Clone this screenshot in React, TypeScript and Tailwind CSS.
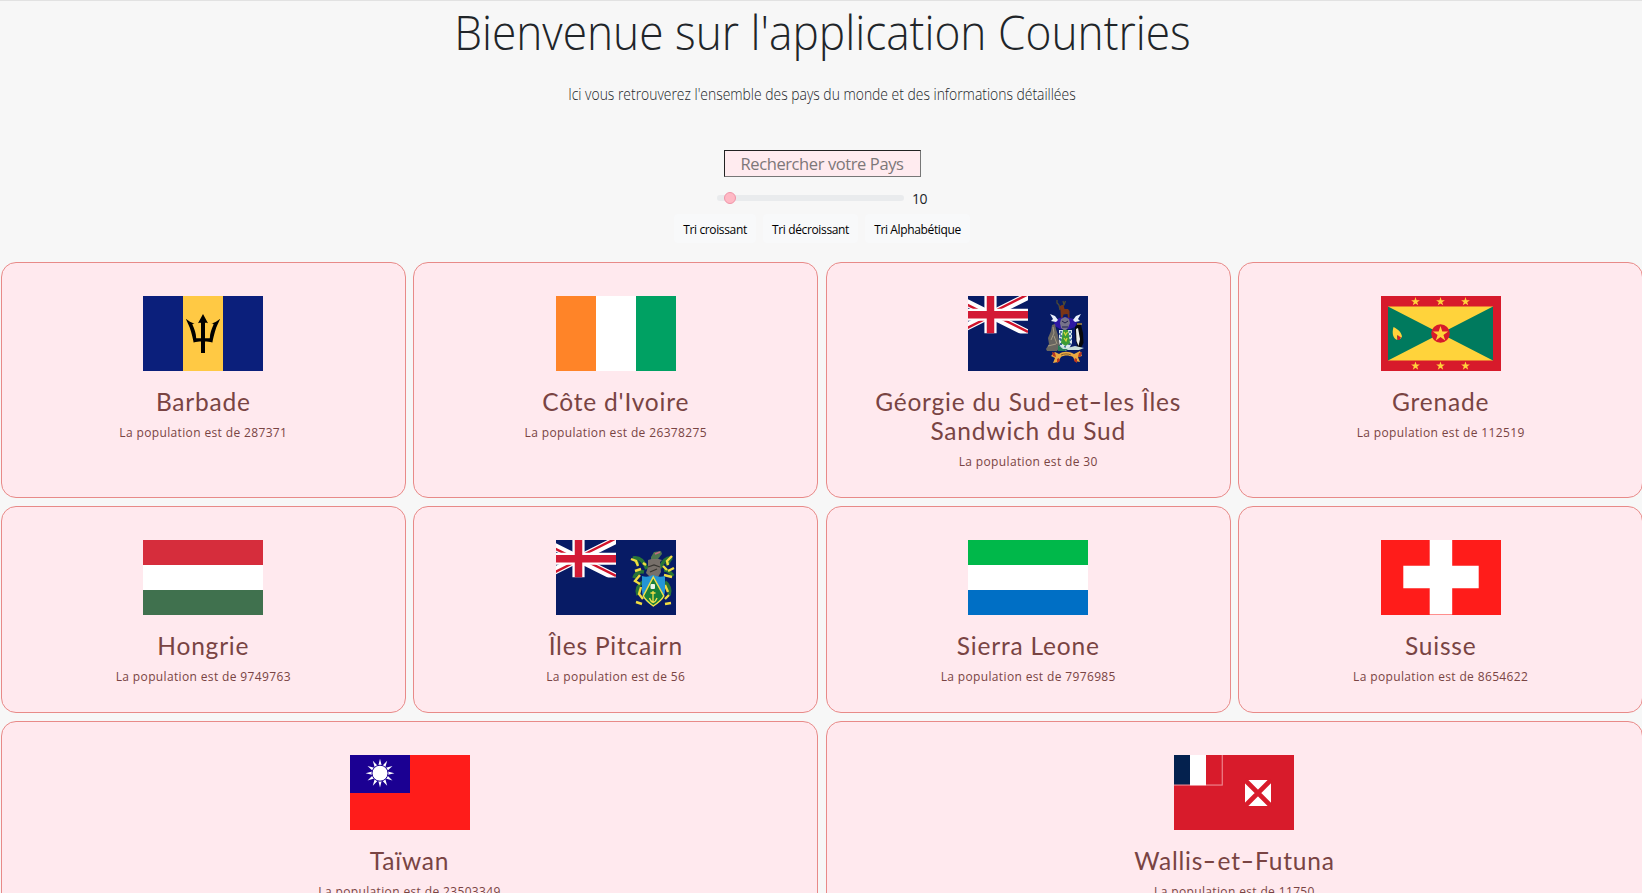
import { Fragment, type ReactNode } from 'react';

function star(cx: number, cy: number, outer: number, inner: number, points = 5): string {
  return Array.from({ length: points * 2 }, (_, i) => {
    const r = i % 2 === 0 ? outer : inner;
    const a = (Math.PI * i) / points - Math.PI / 2;
    return `${(cx + r * Math.cos(a)).toFixed(2)},${(cy + r * Math.sin(a)).toFixed(2)}`;
  }).join(' ');
}

function Flag({ children }: { children: ReactNode }) {
  return (
    <svg viewBox="0 0 120 75" className="block h-[75px] w-[120px] shrink-0 overflow-hidden">
      {children}
    </svg>
  );
}

function UnionJack({ id }: { id: string }) {
  return (
    <g>
      <clipPath id={id}>
        <rect width="60" height="37.5" />
      </clipPath>
      <g clipPath={`url(#${id})`}>
        <path d="M-15 0L60 37.5M60 0L-15 37.5" stroke="#fff" strokeWidth="7.5" />
        <path
          d="M-15 1.6L22.5 20.3M22.5 17.2L60 -1.6M22.5 17.2L60 35.9M-15 39.1L22.5 20.3"
          stroke="#d0142c"
          strokeWidth="2.4"
        />
        <path d="M22.5 0V37.5M-15 18.75H60" stroke="#fff" strokeWidth="12.2" />
        <path d="M22.5 0V37.5M-15 18.75H60" stroke="#d31a35" strokeWidth="7.5" />
      </g>
    </g>
  );
}

const flags = {
  barbade: (
    <>
      <rect width="120" height="75" fill="#0b1f7b" />
      <rect x="40" width="40" height="75" fill="#ffc944" />
      <path d="M60 18l5 9.300c-1.300-.4-2-.5-3-.4V42.300h4.800C67 37 68.500 33 70.500 28.700 70.800 27.900 70 27.700 68.500 27.500 71.600 26.700 74.500 25 77.200 22.800 76 26 73.500 30 72 35.500 71 39 70 43 69.400 46.500 66.500 45.600 64 45.400 62 45.400V57H58V45.400C56 45.400 53.500 45.600 50.600 46.500 50 43 49 39 48 35.500 46.500 30 44 26 42.800 22.800 45.500 25 48.400 26.700 51.500 27.500 50 27.700 49.200 27.900 49.500 28.700 51.500 33 53 37 53.200 42.300H58V26.900c-1-.1-1.700 0-3 .4z" fill="#000" />
    </>
  ),
  cotedivoire: (
    <>
      <rect width="40" height="75" fill="#ff8428" />
      <rect x="40" width="40" height="75" fill="#fff" />
      <rect x="80" width="40" height="75" fill="#00a163" />
    </>
  ),
  georgie: (
    <>
      <rect width="120" height="75" fill="#071b65" />
      <UnionJack id="jack-georgie" />
      <path d="M92 14L91 9l-2-2v-3M93 10l3-1 1.500-4M91 9l-1-1M96 9l-1-4" stroke="#4c4a35" strokeWidth="1.300" fill="none" />
      <path d="M91.500 10l4-1 1 4h3.500l1.500 2v7h-1.500l-.5-4-4 .5-1 4h-1.500l-.5-8z" fill="#7a3517" />
      <path d="M86 26l5-4 7-1 8 2 3 3-2 5-5 2H92l-5-3z" fill="#2e18a5" />
      <path d="M82 18l5 2 3 4-2 2-5-1 2-2zM113 18l-5 2-3 4 2 2 5-1-2-2z" fill="#e8effa" />
      <path d="M93 23l4-2 4 2 1 4-2 5-3 3-4-3-1-5z" fill="#77738a" />
      <path d="M94 25l3 2 3-2M94 31h6" stroke="#20204c" strokeWidth="1" fill="none" />
      <path d="M91 34h13v13l-2.500 5-4 3-4-3L91 48z" fill="#dbe8eb" />
      <path d="M93 35v15M97 34v19M102 35v14M91 38h13M91 43h13M92 48h11" stroke="#2b5f91" strokeWidth="1.500" strokeDasharray="2 2" />
      <path d="M95 34h5l2 13-4.500 3L93 47z" fill="#3c9b36" />
      <path d="M96 36l1.500 3 2-3M96 42l2 3 1-3" stroke="#d8d93d" strokeWidth="1.200" fill="none" />
      <path d="M84 29l3-1 1 5 2 6 2 12-3 4H79l-1-2 3-5-1-6 3-7z" fill="#686560" />
      <path d="M85 31l1 6-3 7M86 40l3 8M80 50l8-2" stroke="#a49a84" strokeWidth="1" fill="none" />
      <path d="M107 31l3-3 3 1 2 8 .500 10-2 4h-4l-2-8z" fill="#07080c" />
      <path d="M108 33l2-1 2 11-1.500 7-2-5z" fill="#eef0ea" />
      <path d="M109 28h5" stroke="#d4a52b" strokeWidth="1.200" />
      <path d="M91 50l8 2 8-2 9 2-5 2H91z" fill="#c9ded8" />
      <path d="M90 49l5 4h5l-3 2h-7z" fill="#267d59" />
      <path d="M87 56l4 2c4-3 10-3 15 0l6-3 2 5-4 1 2 5-5-1-2-4c-4-2-9-2-12 0l-3 5-5 1 2-5-4-2z" fill="#e9a941" />
      <path d="M84 56l3 1 1 4-3-1zM114 56l-3 1-1 4 3-1zM89 63l2-1 1 3-3 2zM109 63l-2-1-1 3 3 2z" fill="#bd3721" />
      <path d="M93 59c3-1.500 7-1.500 10 0" stroke="#5e4325" strokeWidth=".7" fill="none" />
    </>
  ),
  grenade: (
    <>
      <rect width="120" height="75" fill="#d71a2b" />
      <rect x="7" y="10.500" width="105" height="54" fill="#ffd33b" />
      <path d="M7 10.500L112 64.500V10.500L7 64.500z" fill="#007a5e" />
      <circle cx="59.500" cy="37.500" r="9.300" fill="#d71a2b" />
      <polygon points={star(59.5, 38, 8, 3.1)} fill="#ffd33b" />
      {[34.5, 59.5, 84.5].map((x) => (
        <Fragment key={x}>
          <polygon points={star(x, 5.6, 4.6, 1.8)} fill="#ffd33b" />
          <polygon points={star(x, 70, 4.6, 1.8)} fill="#ffd33b" />
        </Fragment>
      ))}
      <path d="M12.500 31c4 2 8 5 8.500 9.500l-1.500 2.500-3.500-4 .5 5c-4-1-6-6-4-13z" fill="#ffd33b" />
      <path d="M16.500 39l3.500 2.500-1.500 2.500h-2z" fill="#d71a2b" />
    </>
  ),
  hongrie: (
    <>
      <rect width="120" height="25" fill="#d62d3c" />
      <rect y="25" width="120" height="25" fill="#fff" />
      <rect y="50" width="120" height="25" fill="#40714e" />
    </>
  ),
  pitcairn: (
    <>
      <rect width="120" height="75" fill="#071b65" />
      <UnionJack id="jack-pitcairn" />
      <path d="M91 29c-3-8-8-12-14-11 4 1 2 5 6 6M104 28c3-7 7-11 12-10-4 1-2 5-6 7M88 32c-5-1-9 2-10 6M87 42c-5 3-7 8-5 13M108 30c4 0 7 3 9 6M109 42c4 3 6 8 4 13" fill="none" stroke="#287436" strokeWidth="3.600" />
      <path d="M75 19l5 2 2 5M79 31l6-2M84 35l-5 6 5 3M85 47l-2 7 4 5M80 62l6 2M116 16l-5 5 1 4M118 28l-6 3M108 35l8 2M109 45l3 7M113 55l-4 4M115 63l-6 1M90 25l-3-2M107 26l4 4" fill="none" stroke="#f1dc42" strokeWidth="2.400" />
      <path d="M92 20l7-2 7 2-2 2 1 10-3 5h-8l-4-4 2-6z" fill="#77706a" />
      <path d="M92 27l6-2 6 2M94 32l7-3" stroke="#393732" strokeWidth="1.300" fill="none" />
      <path d="M95 17l3-5 7-1 1 3-4 5h-7z" fill="#4e7550" />
      <path d="M99 14l5-2" stroke="#c46c82" strokeWidth="1.800" />
      <path d="M86 36q5 2 11-1 6 3 12 1v14c0 8-5 12-12 16-7-4-11-8-11-16z" fill="#2495d5" />
      <path d="M97.300 37l10.500 19c-2 4-6 7-10.500 10-4-3-8-6-10-10z" fill="#178039" stroke="#f2df49" strokeWidth="1.500" />
      <path d="M97 51v11M93.500 58c1 3 2 4 3.500 4.500 2-.5 3-1.500 4-4.500M94.500 53h5" fill="none" stroke="#f2df49" strokeWidth="1.300" />
      <rect x="94.500" y="44" width="4.500" height="5" rx="1" fill="#eef5e9" />
    </>
  ),
  sierra: (
    <>
      <rect width="120" height="25" fill="#00b84a" />
      <rect y="25" width="120" height="25" fill="#fff" />
      <rect y="50" width="120" height="25" fill="#006fc5" />
    </>
  ),
  suisse: (
    <>
      <rect width="120" height="75" fill="#ff1c1a" />
      <path d="M48.700 0h22.500v25.800h26.500v22.500H71.200v26.200H48.700V48.300H22.300V25.800h26.400z" fill="#fff" />
    </>
  ),
  taiwan: (
    <>
      <rect width="120" height="75" fill="#ff1c1a" />
      <rect width="60" height="38" fill="#1b0092" />
      <polygon points={star(30, 18.2, 14.4, 7.2, 12)} fill="#fff" />
      <circle cx="30" cy="18.200" r="8" fill="#fff" stroke="#1b0092" strokeWidth="1" />
    </>
  ),
  wallis: (
    <>
      <rect width="120" height="75" fill="#d81b2b" />
      <rect width="48.800" height="30.600" fill="#ef8c93" />
      <rect width="16" height="29.500" fill="#04214e" />
      <rect x="16" width="16" height="30.300" fill="#fff" />
      <rect x="32" width="15.700" height="29.500" fill="#d81b2b" />
      <rect x="71" y="25" width="26" height="26" fill="#fff" />
      <path d="M71 25l26 26M97 25L71 51" stroke="#d81b2b" strokeWidth="4.600" />
    </>
  ),
};

type Country = { name: string; population: number; flag: keyof typeof flags; wide?: boolean };

const countries: Country[] = [
  { name: 'Barbade', population: 287371, flag: 'barbade' },
  { name: "Côte d'Ivoire", population: 26378275, flag: 'cotedivoire' },
  { name: 'Géorgie du Sud-et-les Îles Sandwich du Sud', population: 30, flag: 'georgie' },
  { name: 'Grenade', population: 112519, flag: 'grenade' },
  { name: 'Hongrie', population: 9749763, flag: 'hongrie' },
  { name: 'Îles Pitcairn', population: 56, flag: 'pitcairn' },
  { name: 'Sierra Leone', population: 7976985, flag: 'sierra' },
  { name: 'Suisse', population: 8654622, flag: 'suisse' },
  { name: 'Taïwan', population: 23503349, flag: 'taiwan', wide: true },
  { name: 'Wallis-et-Futuna', population: 11750, flag: 'wallis', wide: true },
];

function Name({ text }: { text: string }) {
  return (
    <>
      {text.split('-').map((part, i) => (
        <Fragment key={i}>
          {i > 0 && <span className="mx-[2.2px] inline-block scale-x-[1.5]">-</span>}
          {part}
        </Fragment>
      ))}
    </>
  );
}

function Card({ country }: { country: Country }) {
  return (
    <li
      className={`flex flex-col items-center rounded-[15px] border border-[#e88a88] bg-[#ffe9ee] px-8 pt-[33px] pb-[26px] text-center text-[#794443] ${country.wide ? 'col-span-2' : ''}`}
    >
      <Flag>{flags[country.flag]}</Flag>
      <h2 className="mt-[16px] font-[Lato,sans-serif] text-[24.5px] leading-[29px] tracking-[0.8px]">
        <Name text={country.name} />
      </h2>
      <p className="mt-[8px] text-[12px] leading-[18px] tracking-[0.36px]">La population est de {country.population}</p>
    </li>
  );
}

export default function App() {
  return (
    <div className="h-[893px] overflow-hidden border-t border-[#e2e2e2] bg-[#f7f7f7] font-['Open_Sans',sans-serif] text-[#212529]">
      <div className="w-[1643px] pl-px">
        <header className="flex flex-col items-center pt-[2px]">
          <h1 className="scale-x-[0.922] text-[48px] leading-[57.6px] font-light whitespace-nowrap">
            Bienvenue sur l'application Countries
          </h1>
          <p className="mt-[21px] scale-x-[0.869] text-[16px] leading-6 font-light whitespace-nowrap">
            Ici vous retrouverez l'ensemble des pays du monde et des informations détaillées
          </p>
        </header>
        <div className="mt-[44px] flex flex-col items-center">
          <input
            placeholder="Rechercher votre Pays"
            className="h-[27px] w-[197px] border border-t-[#222] border-r-[#777] border-b-[#777] border-l-[#222] bg-[#ffebef] text-center text-[16.5px] tracking-[-0.4px] outline-none placeholder:text-[#7d7779]"
          />
          <div className="mt-[12px] flex h-[18px] items-center gap-2">
            <div className="flex h-[6px] w-[187px] items-center rounded-full bg-[#e9ebed] pl-[7px]">
              <div className="size-3 rounded-full border border-[#f095a8] bg-[#ffb9c5]" />
            </div>
            <span className="pt-[2px] text-[14px] leading-[18px] tracking-[-0.4px]">10</span>
          </div>
          <div className="mt-[7px] flex gap-[7px] text-[12px] tracking-[-0.36px] text-black">
            <button className="h-[29px] w-[82px] rounded bg-[#f8f9fa] pt-[3px]">Tri croissant</button>
            <button className="h-[29px] w-[95px] rounded bg-[#f8f9fa] pt-[3px]">Tri décroissant</button>
            <button className="h-[29px] w-[105px] rounded bg-[#f8f9fa] pt-[3px]">Tri Alphabétique</button>
          </div>
        </div>
        <ul className="mt-[19px] grid grid-cols-4 gap-x-[7.8px] gap-y-2">
          {countries.map((country) => (
            <Card key={country.name} country={country} />
          ))}
        </ul>
      </div>
    </div>
  );
}
